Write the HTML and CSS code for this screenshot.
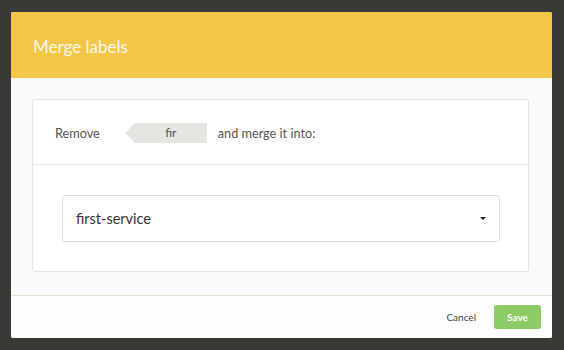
FILE: index.html
```html
<!DOCTYPE html>
<html>
<head>
<meta charset="utf-8">
<link rel="stylesheet" href="styles.css">
</head>
<body>
<div class="modal">
  <div class="modal-header">
    <h1 class="modal-title">Merge labels</h1>
  </div>
  <div class="modal-body">
    <div class="panel">
      <div class="panel-row">
        <span class="text">Remove</span>
        <span class="tag">fir</span>
        <span class="text">and merge it into:</span>
      </div>
      <div class="panel-select">
        <div class="select">
          <span class="select-value">first-service</span>
          <span class="caret"></span>
        </div>
      </div>
    </div>
  </div>
  <div class="modal-footer">
    <button class="btn btn-link">Cancel</button>
    <button class="btn btn-save">Save</button>
  </div>
</div>
</body>
</html>
```

FILE: styles.css
```css
html, body {
  margin: 0;
  padding: 0;
}
body {
  background: #3a3935;
  font-family: Lato, "Open Sans", sans-serif;
  width: 564px;
  height: 350px;
  overflow: hidden;
  padding-top: 12px;
  box-sizing: border-box;
}
.modal {
  margin-left: 11px;
  width: 541px;
  background: #fafafa;
  border-radius: 2px;
  overflow: hidden;
}
.modal-header {
  background: #f3c647;
  height: 66px;
  display: flex;
  align-items: center;
  padding-left: 22px;
}
.modal-title {
  margin: 0;
  font-size: 17px;
  font-weight: 400;
  color: #fdf8ea;
  position: relative;
  top: 1px;
}
.modal-body {
  padding: 21px 23px 23px 21px;
}
.panel {
  background: #fff;
  border: 1px solid #e4e4e4;
  border-radius: 3px;
}
.panel-row {
  height: 65px;
  border-bottom: 1px solid #e6e6e6;
  display: flex;
  align-items: center;
  padding-left: 22px;
  padding-top: 1px;
  box-sizing: border-box;
}
.text {
  font-size: 12.7px;
  color: #555;
}
.tag {
  position: relative;
  margin-left: 35px;
  margin-right: 11px;
  width: 72px;
  height: 20px;
  background: #e6e5e2;
  font-size: 12px;
  color: #555;
  display: flex;
  align-items: center;
  justify-content: center;
}
.tag::before {
  content: "";
  position: absolute;
  left: -10px;
  top: 0;
  border-right: 10px solid #e6e5e2;
  border-top: 10px solid transparent;
  border-bottom: 10px solid transparent;
}
.panel-select {
  padding: 30px 28px 29px 29px;
}
.select {
  height: 45px;
  border: 1px solid #dedede;
  border-radius: 3px;
  display: flex;
  align-items: center;
  justify-content: space-between;
  padding: 0 13px 0 13px;
}
.select-value {
  font-size: 14.5px;
  color: #333;
}
.caret {
  width: 0;
  height: 0;
  border-left: 3px solid transparent;
  border-right: 3px solid transparent;
  border-top: 3px solid #222;
}
.modal-footer {
  background: #fdfdfd;
  border-top: 1px solid #e3e0d2;
  height: 42px;
  display: flex;
  align-items: center;
  justify-content: flex-end;
  padding-right: 11px;
}
.btn {
  font-family: Lato, "Open Sans", sans-serif;
  font-size: 10px;
  border: none;
  cursor: pointer;
}
.btn-link {
  background: transparent;
  color: #444;
  margin-right: 12px;
  padding: 0 6px;
}
.btn-save {
  background: #8ccb66;
  color: #fff;
  width: 47px;
  height: 24px;
  border-radius: 3px;
  font-weight: 700;
}
```
